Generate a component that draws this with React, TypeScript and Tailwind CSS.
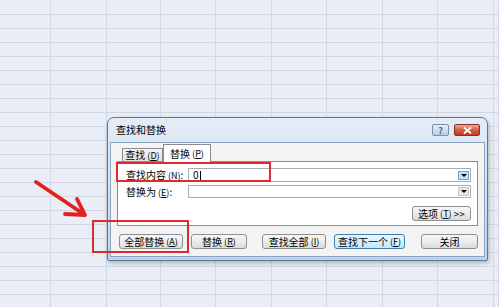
const cols = 10;
const rows = 23;

function Key({ k }: { k: string }) {
  return (
    <span className="ml-[2px] text-[9px]">
      (<span className="underline">{k}</span>)
    </span>
  );
}

function Btn({ children, def, className = "" }: { children: React.ReactNode; def?: boolean; className?: string }) {
  return (
    <div
      className={
        "h-[15px] flex items-center justify-center rounded-[3px] border text-[10px] leading-none text-black " +
        (def
          ? "border-[#3c7fb1] bg-gradient-to-b from-[#eaf6fd] via-[#d9f0fc] to-[#bee6fd] "
          : "border-[#8e8f8f] bg-gradient-to-b from-[#f7f7f7] via-[#ececec] to-[#dadada] ") +
        className
      }
    >
      {children}
    </div>
  );
}

function Combo({ value, active }: { value?: string; active?: boolean }) {
  return (
    <div className="flex-1 h-full flex items-center border border-[#abadb3] bg-white">
      <div className="flex-1 pl-[4px] text-[10px] leading-none text-black flex items-center">
        {value}
        {value !== undefined && <span className="ml-[1px] inline-block w-px h-[9px] bg-black" />}
      </div>
      <div
        className={
          "w-[11px] h-[9px] mr-[1px] flex items-center justify-center border " +
          (active ? "border-[#6ea4c9] bg-[#c7e2f4]" : "border-[#c6c6c6] bg-[#e8e8e8]")
        }
      >
        <div className="w-0 h-0 border-l-[3px] border-r-[3px] border-t-[3px] border-l-transparent border-r-transparent border-t-black" />
      </div>
    </div>
  );
}

export default function App() {
  return (
    <div className="relative w-[499px] h-[307px] overflow-hidden bg-[#e9edf5] font-['Noto_Sans_CJK_SC','Noto_Sans',sans-serif]">
      {/* spreadsheet grid */}
      <div className="pt-px grid grid-cols-[51px_56px_54px_55px_56px_55px_56px_55px_56px_1fr]">
        {Array.from({ length: rows * cols }).map((_, i) => (
          <div key={i} className="h-[14px] border-b border-r border-[#d1d7e4]" />
        ))}
      </div>

      {/* dialog */}
      <div className="absolute left-[107px] top-[117px] w-[381px] h-[144px] flex flex-col rounded-t-[7px] rounded-b-[2px] border border-[#56779e] bg-gradient-to-b from-[#e4ecf6] via-[#d3e1f1] to-[#bfd4ea] shadow-[1px_2px_4px_rgba(0,0,0,0.25)]">
        <div className="h-[24px] flex items-center pl-[8px] pr-[7px]">
          <span className="text-[10px] text-black leading-none">查找和替换</span>
          <div className="ml-auto flex items-center gap-[5px]">
            <div className="w-[17px] h-[12px] rounded-[2px] border border-[#7991ad] bg-gradient-to-b from-[#e6eef7] to-[#b9cde3] flex items-center justify-center text-[9px] leading-none text-[#4a6a8f] font-bold">
              ?
            </div>
            <div className="w-[26px] h-[12px] rounded-[2px] border border-[#8d2e22] bg-gradient-to-b from-[#e9a99c] via-[#d65a45] to-[#c13a24] flex items-center justify-center">
              <svg width="9" height="7" viewBox="0 0 9 7">
                <path d="M1 0.5 L8 6.5 M8 0.5 L1 6.5" stroke="white" strokeWidth="1.8" />
              </svg>
            </div>
          </div>
        </div>

        <div className="flex-1 mx-[2px] mb-[3px] border border-[#8ba6c5] bg-[#f3f3f3] px-[6px] flex flex-col">
          {/* tabs */}
          <div className="h-[18px] flex items-end pl-[5px]">
            <div className="h-[13px] w-[41px] border border-b-0 border-[#898c95] bg-gradient-to-b from-[#f4f4f4] to-[#e3e3e3] flex items-center justify-center text-[10px] leading-none text-black">
              查找<Key k="D" />
            </div>
            <div className="relative z-10 -mb-px h-[18px] w-[48px] border border-b-0 border-[#898c95] bg-white flex items-center justify-center text-[10px] leading-none text-black">
              替换<Key k="P" />
            </div>
          </div>
          <div className="h-[65px] border border-[#898c95] bg-white pl-[8px] pr-[6px] flex flex-col">
            <div className="mt-[6px] h-[14px] flex items-center">
              <div className="w-[62px] text-[10px] leading-none text-black">
                查找内容<Key k="N" />:
              </div>
              <Combo value="0" active />
            </div>
            <div className="mt-[3px] h-[13px] flex items-center">
              <div className="w-[62px] text-[10px] leading-none text-black">
                替换为<Key k="E" />:
              </div>
              <Combo />
            </div>
            <div className="mt-[8px] flex justify-end">
              <Btn className="w-[59px]">
                选项<Key k="T" />&nbsp;&gt;&gt;
              </Btn>
            </div>
          </div>

          {/* buttons */}
          <div className="mt-[8px] flex pl-[2px]">
            <Btn className="w-[64px]">
              全部替换<Key k="A" />
            </Btn>
            <Btn className="w-[56px] ml-[8px]">
              替换<Key k="R" />
            </Btn>
            <Btn className="w-[64px] ml-[15px]">
              查找全部<Key k="I" />
            </Btn>
            <Btn def className="w-[71px] ml-[8px]">
              查找下一个<Key k="F" />
            </Btn>
            <Btn className="w-[57px] ml-[16px]">关闭</Btn>
          </div>
        </div>
      </div>

      {/* annotations */}
      <div className="absolute left-[116px] top-[162px] w-[155px] h-[20px] border-2 border-[#de2a2e]" />
      <div className="absolute left-[92px] top-[220px] w-[97px] h-[33px] border-2 border-[#de2a2e]" />
      <svg className="absolute left-0 top-0" width="499" height="307">
        <path
          d="M36 182 L85 215 M77 199 L85 215 L65 214"
          fill="none"
          stroke="#e3201c"
          strokeWidth="3.8"
          strokeLinecap="round"
          strokeLinejoin="round"
        />
      </svg>
    </div>
  );
}
